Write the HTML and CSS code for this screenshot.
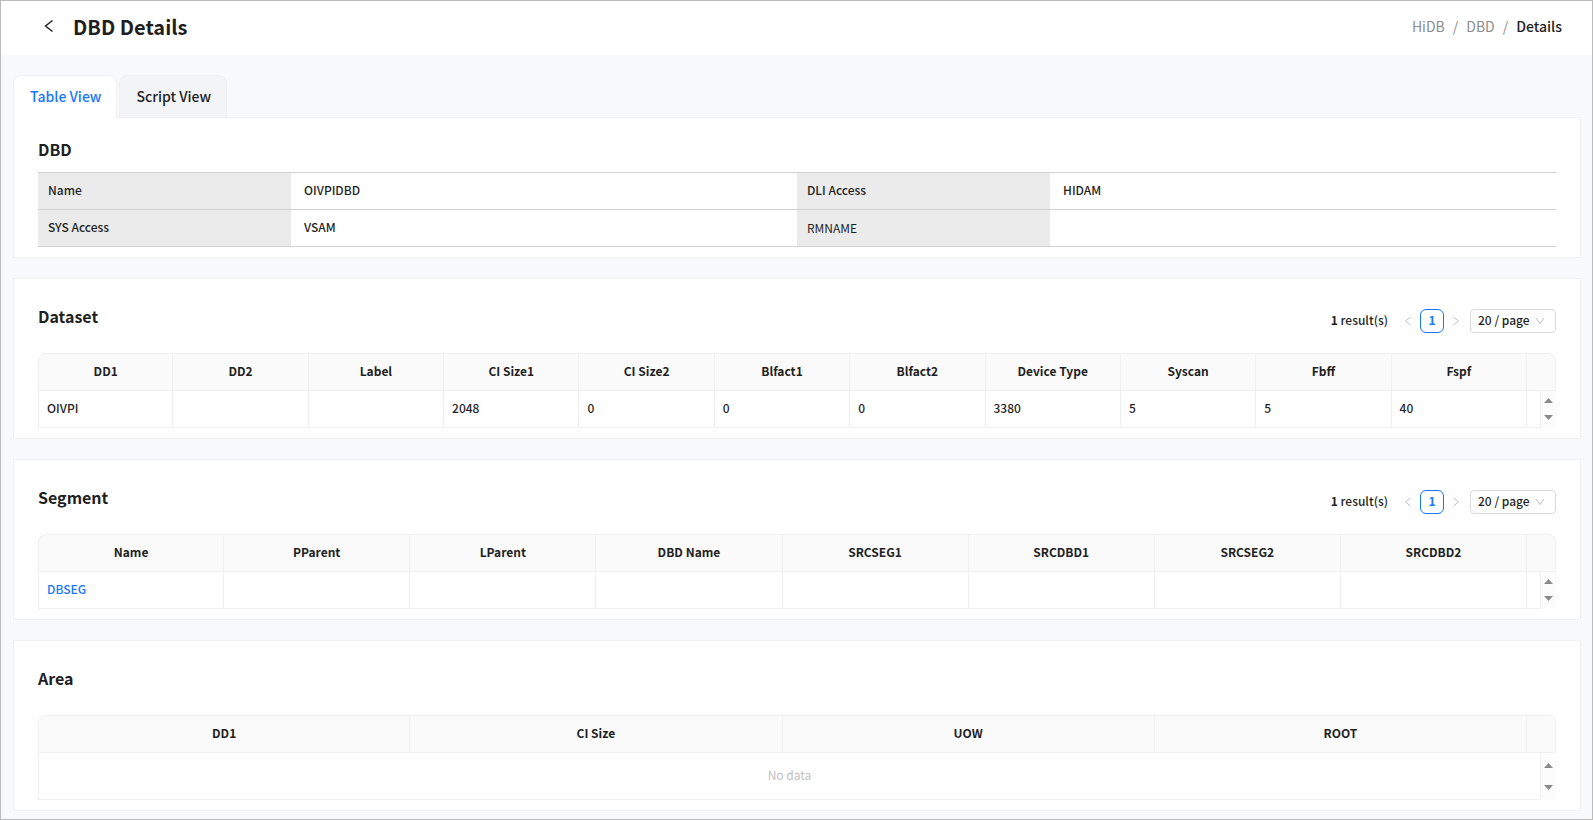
FILE: index.html
```html
<!DOCTYPE html>
<html lang="en">
<head>
<meta charset="utf-8">
<meta name="viewport" content="width=device-width, initial-scale=1">
<title>DBD Details</title>
<link rel="stylesheet" href="styles.css">
</head>
<body>
<div class="app">
  <header class="page-header">
    <button class="back" type="button" aria-label="Back">
      <svg width="10" height="14" viewBox="0 0 10 14" fill="none" stroke="currentColor" stroke-width="1.4"><path d="M8.5 1.5 1.5 7l7 5.5"/></svg>
    </button>
    <h1 class="page-title">DBD Details</h1>
    <nav class="breadcrumb" aria-label="Breadcrumb">
      <a href="#">HiDB</a><span>/</span><a href="#">DBD</a><span>/</span><span class="current">Details</span>
    </nav>
  </header>

  <main class="content">
    <div class="tabs" role="tablist">
      <button class="tab active" type="button" role="tab" aria-selected="true">Table View</button>
      <button class="tab" type="button" role="tab" aria-selected="false">Script View</button>
    </div>

    <section class="card overview">
      <h2 class="card-title">DBD</h2>
      <table class="desc">
        <tbody>
          <tr><th scope="row">Name</th><td>OIVPIDBD</td><th scope="row">DLI Access</th><td>HIDAM</td></tr>
          <tr><th scope="row">SYS Access</th><td>VSAM</td><th scope="row" class="light">RMNAME</th><td></td></tr>
        </tbody>
      </table>
    </section>

    <section class="card">
      <div class="card-head">
        <h2 class="card-title">Dataset</h2>
        <div class="pager">
          <span class="total"><b>1</b> result(s)</span>
          <button class="step" type="button" aria-label="Previous page" disabled><svg width="8" height="10" viewBox="0 0 8 10" fill="none" stroke="currentColor"><path d="M6.5 1 1.5 5l5 4"/></svg></button>
          <button class="page" type="button" aria-current="page">1</button>
          <button class="step" type="button" aria-label="Next page" disabled><svg width="8" height="10" viewBox="0 0 8 10" fill="none" stroke="currentColor"><path d="m1.500 1 5 4-5 4"/></svg></button>
          <span class="size"><select aria-label="Dataset rows per page"><option>20 / page</option></select><svg width="10" height="8" viewBox="0 0 10 8" fill="none" stroke="currentColor"><path d="m1 1 4 5.500L9 1"/></svg></span>
        </div>
      </div>
      <table class="grid">
        <colgroup><col span="11"><col class="col-pad"><col class="col-scroll"></colgroup>
        <thead>
          <tr><th>DD1</th><th>DD2</th><th>Label</th><th>CI Size1</th><th>CI Size2</th><th>Blfact1</th><th>Blfact2</th><th>Device Type</th><th>Syscan</th><th>Fbff</th><th>Fspf</th><th colspan="2"></th></tr>
        </thead>
        <tbody>
          <tr><td>OIVPI</td><td></td><td></td><td>2048</td><td>0</td><td>0</td><td>0</td><td>3380</td><td>5</td><td>5</td><td>40</td><td></td>
            <td class="scroll"><div class="arrows"><svg width="9" height="5" viewBox="0 0 9 5"><path d="M0 5 4.500 0 9 5z"/></svg><svg width="9" height="5" viewBox="0 0 9 5"><path d="M0 0l4.500 5L9 0z"/></svg></div></td></tr>
        </tbody>
      </table>
    </section>

    <section class="card">
      <div class="card-head">
        <h2 class="card-title">Segment</h2>
        <div class="pager">
          <span class="total"><b>1</b> result(s)</span>
          <button class="step" type="button" aria-label="Previous page" disabled><svg width="8" height="10" viewBox="0 0 8 10" fill="none" stroke="currentColor"><path d="M6.5 1 1.5 5l5 4"/></svg></button>
          <button class="page" type="button" aria-current="page">1</button>
          <button class="step" type="button" aria-label="Next page" disabled><svg width="8" height="10" viewBox="0 0 8 10" fill="none" stroke="currentColor"><path d="m1.500 1 5 4-5 4"/></svg></button>
          <span class="size"><select aria-label="Segment rows per page"><option>20 / page</option></select><svg width="10" height="8" viewBox="0 0 10 8" fill="none" stroke="currentColor"><path d="m1 1 4 5.500L9 1"/></svg></span>
        </div>
      </div>
      <table class="grid">
        <colgroup><col span="8"><col class="col-pad"><col class="col-scroll"></colgroup>
        <thead>
          <tr><th>Name</th><th>PParent</th><th>LParent</th><th>DBD Name</th><th>SRCSEG1</th><th>SRCDBD1</th><th>SRCSEG2</th><th>SRCDBD2</th><th colspan="2"></th></tr>
        </thead>
        <tbody>
          <tr><td><a href="#">DBSEG</a></td><td></td><td></td><td></td><td></td><td></td><td></td><td></td><td></td>
            <td class="scroll"><div class="arrows"><svg width="9" height="5" viewBox="0 0 9 5"><path d="M0 5 4.500 0 9 5z"/></svg><svg width="9" height="5" viewBox="0 0 9 5"><path d="M0 0l4.500 5L9 0z"/></svg></div></td></tr>
        </tbody>
      </table>
    </section>

    <section class="card">
      <div class="card-head">
        <h2 class="card-title">Area</h2>
      </div>
      <table class="grid">
        <colgroup><col span="4"><col class="col-pad"><col class="col-scroll"></colgroup>
        <thead>
          <tr><th>DD1</th><th>CI Size</th><th>UOW</th><th>ROOT</th><th colspan="2"></th></tr>
        </thead>
        <tbody>
          <tr class="empty"><td colspan="5">No data</td>
            <td class="scroll"><div class="arrows"><svg width="9" height="5" viewBox="0 0 9 5"><path d="M0 5 4.500 0 9 5z"/></svg><svg width="9" height="5" viewBox="0 0 9 5"><path d="M0 0l4.500 5L9 0z"/></svg></div></td></tr>
        </tbody>
      </table>
    </section>
  </main>
</div>
</body>
</html>
```
FILE: styles.css
```css
* { box-sizing: border-box; }

body {
  margin: 0;
  font: 500 12px/20px "Noto Sans CJK KR", "Noto Sans", sans-serif;
  color: #1f1f1f;
}

button, select { font: inherit; color: inherit; }
a { color: #1677ff; text-decoration: none; }
h1, h2 { margin: 0; }

.app {
  min-height: 100vh;
  border: 1px solid #bbb;
  background: #f8f9fb;
}

.page-header {
  display: flex;
  align-items: center;
  height: 54px;
  padding: 0 30px 4px 40px;
  background: #fff;
}

.back {
  display: flex;
  padding: 0 3px;
  margin-right: 16px;
  border: 0;
  background: none;
}

.page-title {
  flex: 1;
  font-size: 20px;
  line-height: 32px;
  padding-top: 2px;
  font-weight: 700;
}

.breadcrumb {
  display: flex;
  gap: 8px;
  font-size: 14px;
  font-weight: 400;
  color: #8c8c8c;
}
.breadcrumb a { color: inherit; }
.breadcrumb .current { color: #1f1f1f; font-weight: 500; }

.content { padding: 20px 11px 8px 12px; }

.tabs { display: flex; gap: 2px; }
.tab {
  height: 42px;
  padding: 0 15px 2px 16px;
  border: 1px solid #f0f0f0;
  border-bottom: 0;
  border-radius: 8px 8px 0 0;
  background: #f3f4f6;
  font-size: 14px;
}
.tab.active {
  margin-bottom: -1px;
  height: 43px;
  background: #fff;
  color: #1677ff;
  z-index: 1;
}

.card {
  padding: 24px 24px 10px;
  border: 1px solid #f0f0f0;
  background: #fff;
}
.card + .card { margin-top: 20px; }
.overview { padding-top: 19px; }
.overview .card-title { margin-bottom: 11px; }

.card-title {
  font-size: 16px;
  line-height: 24px;
  font-weight: 700;
}

.card-head {
  display: flex;
  justify-content: space-between;
  height: 50px;
}
.card-head .card-title { padding-top: 1px; }

.desc {
  width: 100%;
  table-layout: fixed;
  border-collapse: separate;
  border-spacing: 0;
  border-top: 1px solid #d0d0d0;
}
.desc th, .desc td {
  height: 37px;
  padding: 0 10px 3px;
  border-bottom: 1px solid #d0d0d0;
  font-weight: 500;
  text-align: left;
}
.desc th { width: 16.6667%; background: #ebebeb; }
.desc td { width: 33.3333%; padding: 0 13px 3px; }
.desc .light { padding-bottom: 1px; font-weight: 400; }

.pager {
  display: flex;
  align-items: center;
  height: 24px;
  margin-top: 6px;
}
.total { margin-right: 8px; padding-bottom: 2px; }
.step {
  display: flex;
  justify-content: center;
  width: 24px;
  padding: 0;
  border: 0;
  background: none;
  color: #bfbfbf;
}
.page {
  width: 24px;
  height: 24px;
  padding: 0 0 2px;
  border: 1px solid #1677ff;
  border-radius: 6px;
  background: #fff;
  color: #1677ff;
  font-weight: 700;
  line-height: 20px;
}
.size {
  display: flex;
  align-items: center;
  margin-left: 2px;
  width: 86px;
  height: 24px;
  border: 1px solid #d9d9d9;
  border-radius: 4px;
  color: #bfbfbf;
}
.size select {
  width: 64px;
  padding: 0 0 2px 7px;
  border: 0;
  appearance: none;
  background: none;
  color: #1f1f1f;
}

.grid {
  width: 100%;
  table-layout: fixed;
  border-collapse: separate;
  border-spacing: 0;
}
.col-pad { width: 14px; }
.col-scroll { width: 15px; }
.grid th, .grid td {
  height: 37px;
  padding: 0 8px 3px;
  border-right: 1px solid #f0f0f0;
  border-bottom: 1px solid #f0f0f0;
}
.grid th {
  height: 38px;
  border-top: 1px solid #f0f0f0;
  background: #fafafa;
  font-weight: 700;
  text-align: center;
}
.grid th:first-child { border-left: 1px solid #f0f0f0; border-top-left-radius: 8px; }
.grid th:last-child { border-top-right-radius: 8px; }
.grid td:first-child { border-left: 1px solid #f0f0f0; }
.grid .empty td {
  height: 47px;
  color: #bfbfbf;
  font-weight: 400;
  text-align: center;
}
.grid td.scroll {
  padding: 0 0 1px;
  border: 0;
  background: #fcfcfc;
}
.arrows {
  display: flex;
  flex-direction: column;
  justify-content: space-between;
  align-items: center;
  height: 22px;
  fill: #8a8a8a;
}
.empty .arrows { height: 27px; }
```
